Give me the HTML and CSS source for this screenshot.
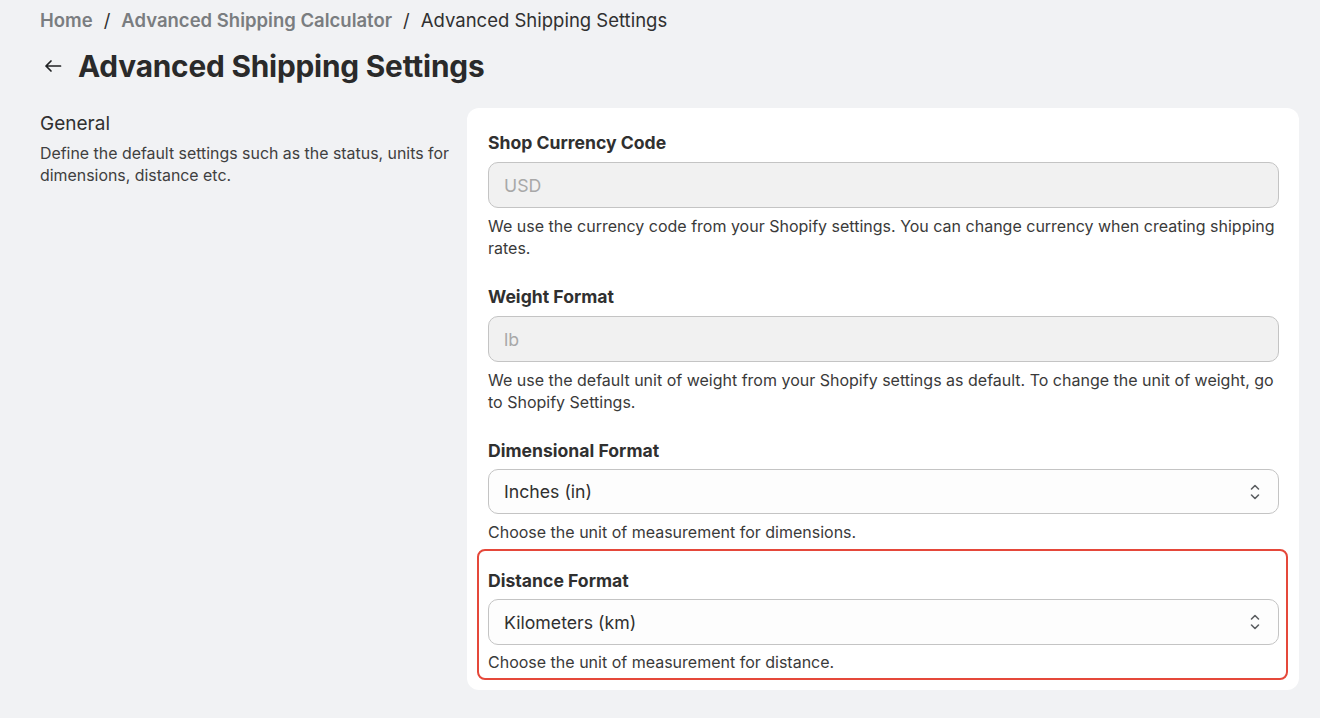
FILE: index.html
```html
<!DOCTYPE html>
<html lang="en">
<head>
<meta charset="utf-8">
<title>Advanced Shipping Settings</title>
<link rel="stylesheet" href="styles.css">
</head>
<body>
<div class="page">
  <nav class="crumbs">
    <a class="crumb">Home</a>
    <span class="sep">/</span>
    <a class="crumb">Advanced Shipping Calculator</a>
    <span class="sep">/</span>
    <span class="current">Advanced Shipping Settings</span>
  </nav>
  <header class="title-row">
    <span class="back">
      <svg width="18" height="14" viewBox="0 0 18 14" fill="none" stroke="#202223" stroke-width="1.7" stroke-linecap="round" stroke-linejoin="round"><path d="M16.5 7H2M7 2L2 7l5 5"/></svg>
    </span>
    <h1 class="title">Advanced Shipping Settings</h1>
  </header>
  <div class="layout">
    <aside class="intro">
      <h2 class="intro-title">General</h2>
      <p class="intro-text">Define the default settings such as the status, units for dimensions, distance etc.</p>
    </aside>
    <section class="card">
      <div class="field">
        <label class="label">Shop Currency Code</label>
        <div class="input disabled">USD</div>
        <p class="help">We use the currency code from your Shopify settings. You can change currency when creating shipping rates.</p>
      </div>
      <div class="field">
        <label class="label">Weight Format</label>
        <div class="input disabled">lb</div>
        <p class="help">We use the default unit of weight from your Shopify settings as default. To change the unit of weight, go to Shopify Settings.</p>
      </div>
      <div class="field">
        <label class="label">Dimensional Format</label>
        <div class="input select">
          <span>Inches (in)</span>
          <svg class="chev" width="12" height="18" viewBox="0 0 12 18" fill="none" stroke="#5c5f62" stroke-width="1.6" stroke-linecap="round" stroke-linejoin="round"><path d="M2.5 6L6 2.5 9.5 6M2.5 12L6 15.5 9.5 12"/></svg>
        </div>
        <p class="help">Choose the unit of measurement for dimensions.</p>
      </div>
      <div class="field highlighted">
        <label class="label">Distance Format</label>
        <div class="input select">
          <span>Kilometers (km)</span>
          <svg class="chev" width="12" height="18" viewBox="0 0 12 18" fill="none" stroke="#5c5f62" stroke-width="1.6" stroke-linecap="round" stroke-linejoin="round"><path d="M2.5 6L6 2.5 9.5 6M2.5 12L6 15.5 9.5 12"/></svg>
        </div>
        <p class="help">Choose the unit of measurement for distance.</p>
      </div>
    </section>
  </div>
</div>
</body>
</html>
```
FILE: styles.css
```css
* { box-sizing: border-box; }
html, body { margin: 0; padding: 0; }
body {
  background: #f1f2f4;
  font-family: Inter, "Noto Sans", "Liberation Sans", sans-serif;
  color: #303030;
}
.page {
  padding: 8px 21px 0 40px;
}
.crumbs {
  display: flex;
  align-items: center;
  gap: 11px;
  font-size: 18.5px;
  line-height: 24px;
  height: 24px;
}
.crumb {
  color: #7a7d80;
  font-weight: 600;
}
.sep { color: #303030; }
.current { color: #303030; font-weight: 400; }
.title-row {
  display: flex;
  align-items: center;
  gap: 16px;
  margin-top: 15px;
  height: 38px;
}
.back { display: flex; width: 18px; margin-left: 4px; }
.title {
  margin: 0;
  font-size: 29.8px;
  line-height: 38px;
  font-weight: 700;
  color: #2a2a2a;
  letter-spacing: -0.2px;
}
.layout {
  display: grid;
  grid-template-columns: 1fr 832px;
  gap: 12px;
  margin-top: 23px;
}
.intro { padding-top: 4px; }
.intro-title {
  margin: 0;
  font-size: 19px;
  line-height: 24px;
  font-weight: 400;
  color: #303030;
}
.intro-text {
  margin: 7px 0 0;
  font-size: 15.9px;
  line-height: 22px;
  color: #404040;
}
.card {
  background: #fff;
  border-radius: 12px;
  padding: 24px 20px 10px 21px;
}
.field + .field { margin-top: 27px; }
.label {
  display: block;
  font-size: 17.6px;
  line-height: 22px;
  font-weight: 700;
  color: #303030;
}
.input {
  margin-top: 8px;
  height: 46px;
  border-radius: 10px;
  border: 1px solid #c4c4c4;
  padding: 0 15px;
  display: flex;
  align-items: center;
  font-size: 17.7px;
}
.input.disabled {
  background: #f1f1f1;
  color: #a8a8a8;
}
.input.select {
  height: 45px;
  margin-top: 7px;
  background: #fdfdfd;
  color: #303030;
  justify-content: space-between;
  padding-right: 17px;
}
.help {
  margin: 7px 0 0;
  font-size: 16px;
  line-height: 22px;
  color: #3a3a3a;
}
.field.highlighted {
  margin: 6px -9px 0 -11px;
  padding: 19px 7px 5px 9px;
  border: 2px solid #e5483a;
  border-radius: 8px;
}
.field.highlighted .input.select {
  height: 46px;
  margin-top: 7px;
}
.field.highlighted .help { margin-top: 6px; }
```
